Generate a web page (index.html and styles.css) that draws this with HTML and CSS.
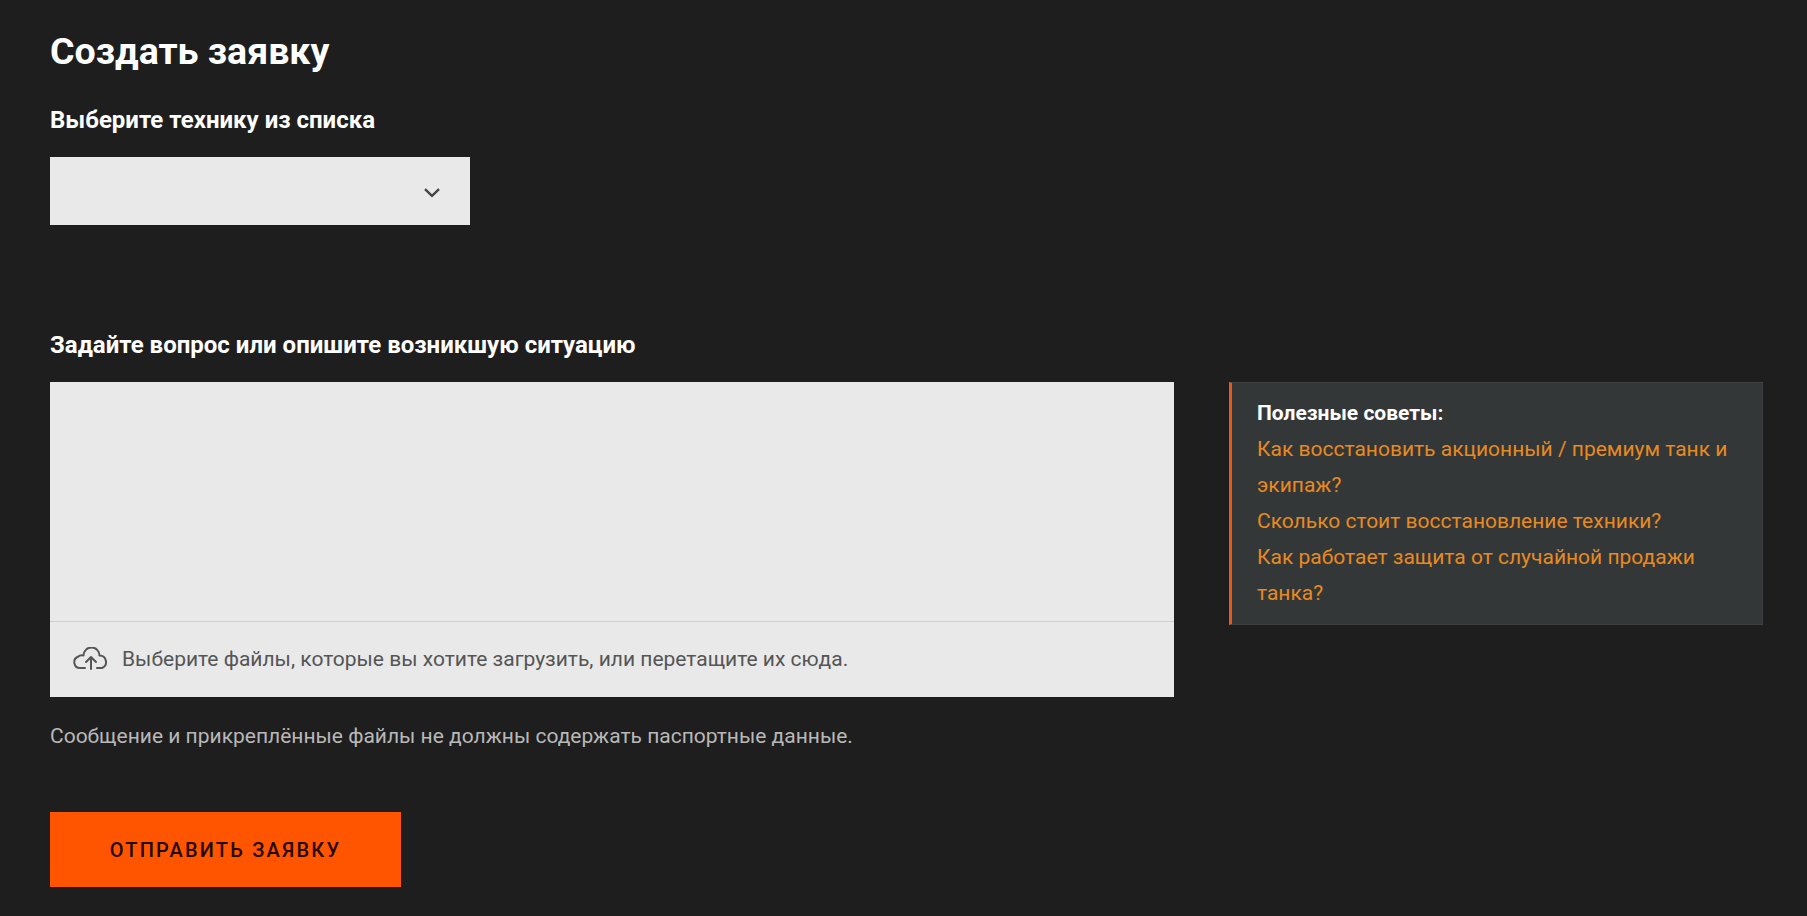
FILE: index.html
```html
<!DOCTYPE html>
<html lang="ru">
<head>
<meta charset="utf-8">
<title>Создать заявку</title>
<link rel="stylesheet" href="styles.css">
</head>
<body>
<main class="page">
  <h1 class="title">Создать заявку</h1>
  <h2 class="label label-first">Выберите технику из списка</h2>
  <div class="select">
    <svg class="chevron" width="16" height="10" viewBox="0 0 16 10"><path d="M1 1.200 8 7.800l7-6.600" fill="none" stroke="#444" stroke-width="2.400"/></svg>
  </div>
  <h2 class="label label-second">Задайте вопрос или опишите возникшую ситуацию</h2>
  <div class="row">
    <div class="form-col">
      <div class="box">
        <div class="area"></div>
        <div class="upload">
          <svg class="cloud" width="36" height="23" viewBox="0 0 36 23" fill="none" stroke="#555" stroke-width="2" stroke-linecap="round" stroke-linejoin="round"><path d="M12 21H7a5.800 5.800 0 0 1-2-11.200A5.500 5.500 0 0 1 10.500 8.500a8 8 0 0 1 16 0 6.500 6.500 0 0 1 2.500 12.500h-5"/><path d="M18 22V10M13 15l5-5 5 5"/></svg>
          <span>Выберите файлы, которые вы хотите загрузить, или перетащите их сюда.</span>
        </div>
      </div>
      <p class="note">Сообщение и прикреплённые файлы не должны содержать паспортные данные.</p>
    </div>
    <aside class="tips">
      <strong class="tips-title">Полезные советы:</strong>
      <a class="tip" href="#">Как восстановить акционный / премиум танк и экипаж?</a>
      <a class="tip" href="#">Сколько стоит восстановление техники?</a>
      <a class="tip" href="#">Как работает защита от случайной продажи танка?</a>
    </aside>
  </div>
  <button class="submit" type="button">Отправить заявку</button>
</main>
</body>
</html>
```
FILE: styles.css
```css
html, body {
  margin: 0;
  height: 100%;
  background: #1e1e1e;
}
body {
  font-family: Roboto, "Liberation Sans", sans-serif;
  overflow: hidden;
}
.page {
  padding: 29px 44px 0 50px;
}
.title {
  margin: 0;
  font-size: 37.5px;
  line-height: 44px;
  font-weight: 700;
  color: #fff;
}
.label {
  margin: 0;
  font-size: 24px;
  line-height: 30px;
  font-weight: 700;
  color: #fff;
}
.label-first {
  margin-top: 32px;
}
.select {
  display: flex;
  align-items: center;
  justify-content: flex-end;
  box-sizing: border-box;
  width: 420px;
  height: 68px;
  margin-top: 22px;
  padding: 3px 30px 0 0;
  background: #e9e9e9;
}
.label-second {
  margin-top: 105px;
}
.row {
  display: flex;
  align-items: flex-start;
  justify-content: space-between;
  margin-top: 22px;
}
.form-col {
  width: 1124px;
}
.box {
  background: #e9e9e9;
}
.area {
  height: 239px;
}
.upload {
  display: flex;
  align-items: center;
  gap: 13px;
  box-sizing: border-box;
  height: 76px;
  padding: 0 0 2px 23px;
  border-top: 1px solid #cfcfcf;
  font-size: 21px;
  color: #555;
}
.note {
  margin: 25px 0 0;
  font-size: 21px;
  line-height: 28px;
  color: #b8b8b8;
}
.tips {
  display: flex;
  flex-direction: column;
  box-sizing: border-box;
  width: 534px;
  height: 243px;
  padding: 12px 30px 0 25px;
  background: #343738;
  border: 1px solid #3e4041;
  border-left: 3px solid #e8591b;
  font-size: 21px;
  line-height: 36px;
}
.tips-title {
  color: #fff;
  font-weight: 700;
}
.tip {
  color: #e88a22;
  text-decoration: none;
}
.submit {
  display: block;
  width: 351px;
  height: 75px;
  margin-top: 62px;
  padding: 0;
  border: 0;
  background: #ff5500;
  color: #240800;
  font-family: inherit;
  font-size: 20px;
  font-weight: 500;
  letter-spacing: 2.2px;
  text-transform: uppercase;
}
```
